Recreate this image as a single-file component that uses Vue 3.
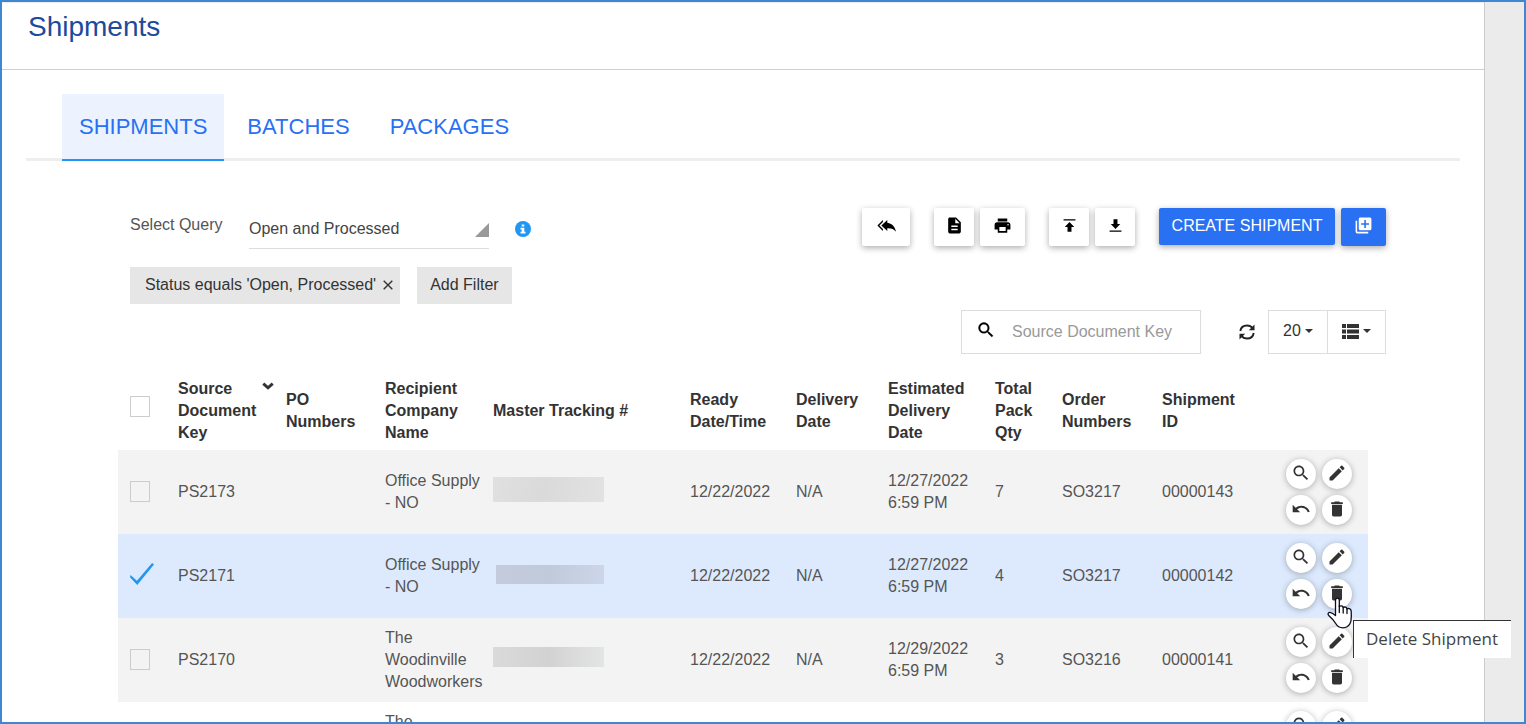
<script setup>
import { ref } from 'vue'

const tabs = ['SHIPMENTS', 'BATCHES', 'PACKAGES']
const activeTab = ref('SHIPMENTS')
const query = ref('Open and Processed')
const search = ref('')

const icons = {
  replyAll: 'M7.500 7.500V5l-7 7 7 7v-2.500L3 12zM13 8.500V5l-7.500 7 7.500 7v-3.600c5-.2 8.500 1.100 11 4.600-1-5.500-4-10.500-11-11.500z',
  file: 'M14 2H6c-1.1 0-1.99.9-1.99 2L4 20c0 1.1.89 2 1.99 2H18c1.1 0 2-.9 2-2V8l-6-6zm2 16H8v-2h8v2zm0-4H8v-2h8v2zm-3-5V3.5L18.500 9H13z',
  print: 'M19 8H5c-1.66 0-3 1.34-3 3v6h4v4h12v-4h4v-6c0-1.66-1.34-3-3-3zm-3 11H8v-5h8v5zm3-7c-.55 0-1-.45-1-1s.45-1 1-1 1 .45 1 1-.45 1-1 1zm-1-9H6v4h12V3z',
  upload: 'M4.500 4v1.600h15V4h-15zM6 14h3.500v6h5v-6H18l-6-6.500z',
  download: 'M4.500 18.400v1.600h15v-1.600h-15zM6 10h3.500V4h5v6H18l-6 6.500z',
  library: 'M4 6H2v14c0 1.1.9 2 2 2h14v-2H4V6zm16-4H8c-1.1 0-2 .9-2 2v12c0 1.1.9 2 2 2h12c1.1 0 2-.9 2-2V4c0-1.1-.9-2-2-2zm-1 9h-4v4h-2v-4H9V9h4V5h2v4h4v2z',
  search: 'M15.5 14h-.79l-.28-.27C15.41 12.59 16 11.11 16 9.5 16 5.91 13.09 3 9.5 3S3 5.91 3 9.5 5.91 16 9.5 16c1.61 0 3.09-.59 4.23-1.57l.27.28v.79l5 4.99L20.49 19l-4.99-5zm-6 0C7.01 14 5 11.99 5 9.5S7.01 5 9.5 5 14 7.01 14 9.5 11.99 14 9.5 14z',
  edit: 'M3 17.250V21h3.750L17.810 9.940l-3.750-3.750L3 17.250zM20.710 7.040c.39-.39.39-1.020 0-1.410l-2.340-2.340c-.39-.39-1.020-.39-1.410 0l-1.830 1.830 3.750 3.750 1.830-1.830z',
  undo: 'M12.500 8c-2.650 0-5.050.99-6.900 2.600L2 7v9h9l-3.620-3.620c1.390-1.160 3.160-1.880 5.120-1.880 3.540 0 6.550 2.310 7.600 5.500l2.370-.780C21.080 11.030 17.150 8 12.500 8z',
  trash: 'M6 19c0 1.100.9 2 2 2h8c1.100 0 2-.9 2-2V7H6v12zM19 4h-3.500l-1-1h-5l-1 1H5v2h14V4z',
}

const toolGroups = [
  [{ id: 'replyAll', label: 'Undo all', size: 'wide' }],
  [
    { id: 'file', label: 'Documents', size: 'narrow' },
    { id: 'print', label: 'Print', size: 'mid' },
  ],
  [
    { id: 'upload', label: 'Import', size: 'narrow' },
    { id: 'download', label: 'Export', size: 'narrow' },
  ],
]

const columns = [
  { key: 'po', lines: ['PO', 'Numbers'] },
  { key: 'company', lines: ['Recipient', 'Company', 'Name'] },
  { key: 'tracking', lines: ['Master Tracking #'] },
  { key: 'ready', lines: ['Ready', 'Date/Time'] },
  { key: 'delivery', lines: ['Delivery', 'Date'] },
  { key: 'estimated', lines: ['Estimated', 'Delivery', 'Date'] },
  { key: 'qty', lines: ['Total', 'Pack', 'Qty'] },
  { key: 'order', lines: ['Order', 'Numbers'] },
  { key: 'id', lines: ['Shipment', 'ID'] },
]

const rows = ref([
  { key: 'PS2173', checked: false, company: ['Office Supply', '- NO'], mask: 'tall', ready: '12/22/2022', delivery: 'N/A', est: ['12/27/2022', '6:59 PM'], qty: 7, order: 'SO3217', id: '00000143' },
  { key: 'PS2171', checked: true, company: ['Office Supply', '- NO'], mask: 'blue', ready: '12/22/2022', delivery: 'N/A', est: ['12/27/2022', '6:59 PM'], qty: 4, order: 'SO3217', id: '00000142', hover: true },
  { key: 'PS2170', checked: false, company: ['The', 'Woodinville', 'Woodworkers'], mask: 'short', ready: '12/22/2022', delivery: 'N/A', est: ['12/29/2022', '6:59 PM'], qty: 3, order: 'SO3216', id: '00000141' },
])

const actions = [
  { id: 'search', label: 'View Shipment' },
  { id: 'edit', label: 'Edit Shipment' },
  { id: 'undo', label: 'Undo Shipment' },
  { id: 'trash', label: 'Delete Shipment' },
]
</script>

<template>
  <div class="window">
    <main class="panel">
      <header class="page-head">
        <h1>Shipments</h1>
      </header>

      <nav class="tabs">
        <button
          v-for="tab in tabs"
          :key="tab"
          type="button"
          class="tab"
          :class="{ active: tab === activeTab }"
          @click="activeTab = tab"
        >{{ tab }}</button>
      </nav>

      <section class="content">
        <div class="toolbar">
          <div class="query">
            <label for="query">Select Query</label>
            <div class="select-wrap">
              <select id="query" v-model="query">
                <option>Open and Processed</option>
              </select>
            </div>
            <svg class="info" viewBox="0 0 16 16" aria-hidden="true">
              <circle cx="8" cy="8" r="8" fill="#2196f3" />
              <path d="M6.700 3.500h2.600v2H6.700zM5.500 6.700h3.800v4h1.200v1.800h-5v-1.800h1.200V8.500H5.500z" fill="#fff" />
            </svg>
          </div>

          <div class="tools">
            <div v-for="(group, g) in toolGroups" :key="g" class="tool-group">
              <button v-for="tool in group" :key="tool.id" type="button" class="tool" :class="tool.size" :aria-label="tool.label">
                <svg viewBox="0 0 24 24"><path :d="icons[tool.id]" /></svg>
              </button>
            </div>
            <div class="tool-group">
              <button type="button" class="create">CREATE SHIPMENT</button>
              <button type="button" class="tool mid primary" aria-label="Create multiple">
                <svg viewBox="0 0 24 24"><path :d="icons.library" /></svg>
              </button>
            </div>
          </div>
        </div>

        <div class="filters">
          <button type="button" class="chip">
            <span>Status equals 'Open, Processed'</span>
            <svg viewBox="0 0 10 10"><path d="M.7.7l8.600 8.600M9.300.7L.7 9.300" stroke="#333" stroke-width="1.400" /></svg>
          </button>
          <button type="button" class="chip add">Add Filter</button>
        </div>

        <div class="search-row">
          <label class="search">
            <svg viewBox="0 0 24 24"><path :d="icons.search" stroke="#000" stroke-width=".3" /></svg>
            <input v-model="search" type="text" placeholder="Source Document Key" aria-label="Source Document Key" />
          </label>
          <button type="button" class="refresh" aria-label="Refresh">
            <svg viewBox="0 0 16 16">
              <path d="M1.300 7C1.800 3.700 4.500 1.500 8 1.500c2.400 0 4.300 1 5.600 2.800M14.700 9c-.5 3.300-3.200 5.500-6.700 5.500-2.400 0-4.300-1-5.600-2.800" fill="none" stroke="#222" stroke-width="1.900" />
              <path d="M15.500.5V6.200H9.800zM.5 15.500V9.800h5.700z" fill="#222" />
            </svg>
          </button>
          <div class="view-group">
            <button type="button" aria-label="Page size 20">20<i class="caret"></i></button>
            <button type="button" aria-label="Columns">
              <svg viewBox="0 0 17 15"><path d="M0 0h4v4H0zM5 0h12v4H5zM0 5.500h4v4H0zM5 5.500h12v4H5zM0 11h4v4H0zM5 11h12v4H5z" /></svg>
              <i class="caret"></i>
            </button>
          </div>
        </div>

        <table>
          <colgroup>
            <col class="c-check" /><col class="c-key" /><col class="c-po" /><col class="c-company" />
            <col class="c-tracking" /><col class="c-ready" /><col class="c-delivery" /><col class="c-est" />
            <col class="c-qty" /><col class="c-order" /><col class="c-id" /><col />
          </colgroup>
          <thead>
            <tr>
              <th class="check-head"><input type="checkbox" aria-label="Select all" /></th>
              <th>
                <div class="sorted">
                  <span>Source<br />Document<br />Key</span>
                  <svg viewBox="0 0 12 8"><path d="M1.300 1.600L6 5.800l4.700-4.200" fill="none" stroke="#333" stroke-width="3" /></svg>
                </div>
              </th>
              <th v-for="col in columns" :key="col.key">
                <div v-for="line in col.lines" :key="line">{{ line }}</div>
              </th>
              <th></th>
            </tr>
          </thead>
          <tbody>
            <tr v-for="row in rows" :key="row.key" :class="{ selected: row.checked }">
              <td><input v-model="row.checked" type="checkbox" :aria-label="'Select ' + row.key" /></td>
              <td>{{ row.key }}</td>
              <td></td>
              <td><div v-for="line in row.company" :key="line">{{ line }}</div></td>
              <td><div class="mask" :class="row.mask"></div></td>
              <td>{{ row.ready }}</td>
              <td>{{ row.delivery }}</td>
              <td><div v-for="line in row.est" :key="line">{{ line }}</div></td>
              <td>{{ row.qty }}</td>
              <td>{{ row.order }}</td>
              <td>{{ row.id }}</td>
              <td>
                <div class="actions" :class="{ hovered: row.hover }">
                  <button v-for="action in actions" :key="action.id" type="button" :aria-label="action.label">
                    <svg viewBox="0 0 24 24"><path :d="icons[action.id]" /></svg>
                  </button>
                  <template v-if="row.hover">
                    <div class="tooltip" role="tooltip">Delete Shipment</div>
                    <svg class="pointer" viewBox="0 0 26 32">
                      <path
                        d="M8.500 3.200C8.500.3 12.300.3 12.300 3.200V9.500c1.600-1.200 3.600-.6 3.900 1 1.500-1 3.500-.3 3.800 1.300 2-1 4.200.2 4.200 2.500 0 5 .8 9-1.300 12.500-1.500 2.700-4 4-7 4-3.500 0-5.600-1.500-7.200-4.300C7 23.500 4.500 21 2 18.800c-2-1.800-.5-4 1.800-3.200 1.900.6 3.200 1.600 4.700 3z"
                        fill="#fff" stroke="#0b0b20" stroke-width="1.300" stroke-linejoin="round"
                      />
                      <path d="M12.300 9v6.500M16.200 10.500v5.500M20 12v4.500" fill="none" stroke="#0b0b20" stroke-width="1.300" stroke-linecap="round" />
                    </svg>
                  </template>
                </div>
              </td>
            </tr>
            <tr class="next-row">
              <td colspan="3"></td>
              <td>The</td>
              <td colspan="7"></td>
              <td>
                <div class="actions">
                  <button v-for="action in actions" :key="action.id" type="button" :aria-label="action.label">
                    <svg viewBox="0 0 24 24"><path :d="icons[action.id]" /></svg>
                  </button>
                </div>
              </td>
            </tr>
          </tbody>
        </table>
      </section>
    </main>
    <aside class="gutter"></aside>
  </div>
</template>

<style>
body {
  overflow: hidden;
}
</style>

<style scoped>
* {
  box-sizing: border-box;
}
.window {
  display: flex;
  height: 100vh;
  overflow: hidden;
  border: 2px solid #3f87d4;
  background: #fff;
  color: #555;
  font-family: "Liberation Sans", Arial, sans-serif;
  font-size: 16px;
  line-height: 22px;
}
button,
select,
input {
  margin: 0;
  padding: 0;
  border: 0;
  background: none;
  color: inherit;
  font: inherit;
}
button {
  cursor: pointer;
}
svg {
  display: block;
  flex: none;
}
.panel {
  flex: 1;
  min-width: 0;
  box-shadow: inset 0 2px 1px -1px #ececec;
}
.gutter {
  width: 40px;
  border-left: 1px solid #ccc;
  background: #ebebeb;
}
.page-head {
  height: 68px;
  padding: 8px 26px 0;
  border-bottom: 1px solid #d0d0d0;
}
h1 {
  margin: 0;
  color: #1c4a9c;
  font-size: 28px;
  font-weight: 400;
  line-height: 34px;
}
.tabs {
  display: flex;
  gap: 6px;
  margin: 24px 24px 0;
  padding-left: 36px;
  box-shadow: inset 0 -3px #eee;
}
.tab {
  height: 67px;
  padding: 0 17px;
  border-bottom: 2px solid transparent;
  color: #2970f3;
  font-size: 22px;
}
.tab.active {
  border-bottom-color: #2196f3;
  background: #ecf3fe;
}
.content {
  padding: 47px 98px 0 128px;
}
.toolbar {
  display: flex;
  justify-content: space-between;
  align-items: flex-start;
  height: 41px;
}
.query {
  display: flex;
  height: 41px;
}
.query label {
  width: 119px;
  padding-top: 6px;
}
.select-wrap {
  position: relative;
  width: 240px;
  border-bottom: 1px solid #ddd;
}
.select-wrap::after {
  content: "";
  position: absolute;
  right: 0;
  bottom: 11px;
  width: 14px;
  height: 14px;
  background: #999;
  clip-path: polygon(100% 0, 100% 100%, 0 100%);
  pointer-events: none;
}
select {
  width: 100%;
  height: 40px;
  padding-top: 1px;
  appearance: none;
  color: #444;
}
.info {
  width: 16px;
  height: 16px;
  margin: 13px 0 0 26px;
}
.tools {
  display: flex;
  gap: 24px;
}
.tool-group {
  display: flex;
  align-items: flex-start;
  gap: 6px;
}
.tool,
.create {
  display: flex;
  align-items: center;
  justify-content: center;
  height: 38px;
  padding-bottom: 4px;
  border-radius: 2px;
  background: #fff;
  box-shadow: 0 2px 6px rgba(0, 0, 0, 0.32);
}
.tool svg {
  width: 19px;
  height: 19px;
}
.tool.wide {
  width: 48px;
}
.tool.mid {
  width: 45px;
}
.tool.narrow {
  width: 40px;
}
.create {
  width: 176px;
  height: 37px;
  padding-bottom: 2px;
  background: #2970f3;
  color: #fff;
}
.tool.primary {
  background: #2970f3;
  fill: #fff;
}
.filters {
  display: flex;
  gap: 17px;
  margin-top: 18px;
}
.chip {
  display: flex;
  align-items: center;
  gap: 7px;
  height: 37px;
  padding: 0 7px 2px 15px;
  background: #e6e6e6;
  color: #333;
}
.chip svg {
  width: 10px;
  height: 10px;
}
.chip.add {
  padding: 0 13px 2px;
}
.search-row {
  display: flex;
  justify-content: flex-end;
  align-items: center;
  height: 44px;
  margin-top: 6px;
}
.search {
  display: flex;
  align-items: center;
  gap: 16px;
  width: 240px;
  height: 44px;
  padding: 0 14px;
  border: 1px solid #ddd;
}
.search svg {
  width: 20px;
  height: 20px;
  margin-bottom: 4px;
}
.search input {
  flex: 1;
  min-width: 0;
  outline: 0;
}
.search input::placeholder {
  color: #999;
  opacity: 1;
}
.refresh {
  margin: 0 13px 0 38px;
}
.refresh svg {
  width: 16px;
  height: 16px;
}
.view-group {
  display: flex;
  height: 44px;
  border: 1px solid #ddd;
}
.view-group button {
  display: flex;
  align-items: center;
  justify-content: center;
  gap: 4px;
  width: 58px;
  padding-bottom: 2px;
  color: #333;
}
.view-group button + button {
  border-left: 1px solid #ddd;
}
.view-group svg {
  width: 17px;
  height: 15px;
  fill: #333;
}
.caret {
  border: 4px solid transparent;
  border-top-color: #333;
  border-bottom: 0;
}
table {
  width: calc(100% - 6px);
  margin: 16px 0 0 -12px;
  border-collapse: collapse;
  table-layout: fixed;
}
.c-check { width: 48px; }
.c-key { width: 108px; }
.c-po { width: 99px; }
.c-company { width: 108px; }
.c-tracking { width: 197px; }
.c-ready { width: 106px; }
.c-delivery { width: 92px; }
.c-est { width: 107px; }
.c-qty { width: 67px; }
.c-order { width: 100px; }
.c-id { width: 100px; }
th,
td {
  padding: 0 0 0 12px;
  text-align: left;
  vertical-align: middle;
  white-space: nowrap;
}
th {
  height: 80px;
  padding-top: 2px;
  color: #333;
  font-weight: 700;
}
td {
  height: 84px;
}
.check-head {
  padding-top: 0;
  padding-bottom: 7px;
}
tbody tr:nth-child(odd) {
  background: #f3f3f3;
}
tbody tr.selected {
  background: #ddeafe;
}
.next-row td {
  padding-top: 9px;
  vertical-align: top;
}
.sorted {
  display: flex;
  justify-content: space-between;
}
.sorted svg {
  width: 12px;
  height: 8px;
  margin-top: 4px;
}
input[type="checkbox"] {
  display: block;
  width: 20px;
  height: 21px;
  appearance: none;
  border: 1px solid #ccc;
}
td input[type="checkbox"] {
  margin-bottom: 2px;
}
td input[type="checkbox"]:checked {
  width: 24px;
  height: 22px;
  margin-bottom: 4px;
  border: 0;
  background: #2196f3;
  clip-path: polygon(2% 54%, 29% 81%, 92% 0, 100% 7%, 30% 100%, 0 65%);
}
.mask {
  width: 111px;
  height: 20px;
  margin-bottom: 6px;
  background: linear-gradient(90deg, #dadada, #d2d2d2 50%, #e3e5e4);
}
.mask.tall {
  height: 25px;
  background: linear-gradient(100deg, #e0e0e0, #dadada 45%, #e2e2e2);
}
.mask.blue {
  width: 108px;
  height: 19px;
  margin: 0 0 4px 3px;
  background: linear-gradient(90deg, #c4cbdc, #c1cadb 50%, #cdd6e9);
}
.actions {
  position: relative;
  display: grid;
  grid-template-columns: 30px 30px;
  gap: 6px;
  width: 66px;
  margin: 0 16px 0 auto;
}
.actions.hovered {
  z-index: 1;
}
.actions button {
  display: flex;
  align-items: center;
  justify-content: center;
  height: 30px;
  padding-bottom: 2px;
  border-radius: 50%;
  background: #fff;
  box-shadow: 0 1px 6px rgba(0, 0, 0, 0.3);
}
.actions button svg {
  width: 20px;
  height: 20px;
  fill: #333;
}
.tooltip {
  position: absolute;
  top: 77px;
  left: 67px;
  padding: 7px 13px 8px 12px;
  border-top: 1px solid #333;
  border-left: 1px solid #333;
  background: #fff;
  color: #444;
  font-family: "Open Sans", "Noto Sans", sans-serif;
  font-size: 17px;
}
.pointer {
  position: absolute;
  top: 54px;
  left: 41px;
  width: 26px;
  height: 32px;
}
</style>
